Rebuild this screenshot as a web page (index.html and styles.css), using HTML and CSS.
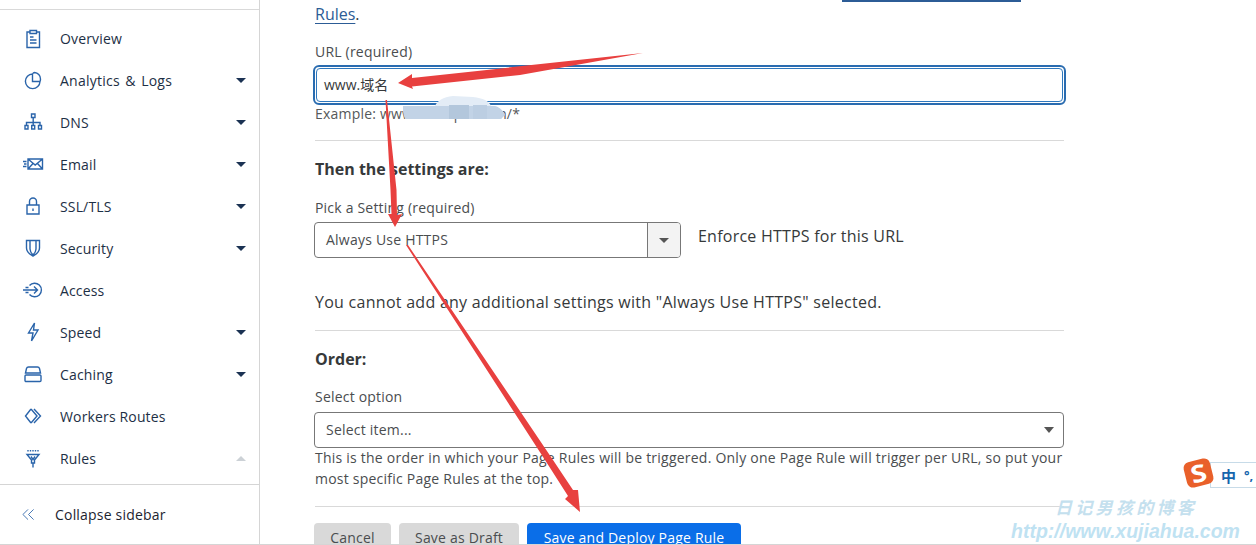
FILE: index.html
```html
<!DOCTYPE html>
<html lang="en">
<head>
<meta charset="utf-8">
<title>Page Rules</title>
<link rel="stylesheet" href="styles.css">
</head>
<body>
<div class="app">
  <aside class="sidebar">
    <div class="sidebar-top"></div>
    <nav class="nav">
      <a class="nav-item"><span class="nav-icon"><svg viewBox="0 0 20 20"><path d="M6.500 4H4v15.500h12.500V4H14M7 2.500h6.500v3H7zM7 9h3.500M7 12h6.500M7 15h6.500"/></svg></span><span class="nav-label">Overview</span><span class="caret"></span></a>
      <a class="nav-item"><span class="nav-icon"><svg viewBox="0 0 20 20"><path d="M9.500 4a7.300 7.300 0 1 0 7.500 7.500H9.500zM9.500 4c.6-1 1.300-1.500 2-1.500a6.500 6.500 0 0 1 6 6.500c0 1-.2 1.800-.5 2.500"/></svg></span><span class="nav-label nav-label-wide">Analytics &amp; Logs</span><span class="caret"></span></a>
      <a class="nav-item"><span class="nav-icon"><svg viewBox="0 0 20 20"><path d="M8.500 2h3.500v3.500H8.500zM10.200 5.500v5M3.500 13.500v-3h13.500v3M10.200 10.500v3M2 13.500h3v3.500H2zM8.700 13.500h3v3.500h-3zM15.500 13.500h3v3.500h-3z"/></svg></span><span class="nav-label">DNS</span><span class="caret"></span></a>
      <a class="nav-item"><span class="nav-icon"><svg viewBox="0 0 20 20"><path d="M5 5h14.500v10H5zM5 5l7.200 6 7.300-6M5 15l5-5.500M19.500 15 14.500 9.500M0 7.500h3.500M1 10h2.500M0 12.500h3.500"/></svg></span><span class="nav-label">Email</span><span class="caret"></span></a>
      <a class="nav-item"><span class="nav-icon"><svg viewBox="0 0 20 20"><path d="M4 9h12v9H4zM6.500 9V5.500a3.500 3.500 0 0 1 7 0V9M10 12.500v2.500"/></svg></span><span class="nav-label">SSL/TLS</span><span class="caret"></span></a>
      <a class="nav-item"><span class="nav-icon"><svg viewBox="0 0 20 20"><path d="M3.500 2.500h13v7.500c0 3.500-3.500 6.500-6.500 8-3-1.500-6.500-4.500-6.500-8zM7 3v8c0 2 1.500 4.500 3 6 1.500-1.500 3-4 3-6V3"/></svg></span><span class="nav-label">Security</span><span class="caret"></span></a>
      <a class="nav-item"><span class="nav-icon"><svg viewBox="0 0 20 20"><path d="M6.500 5.500a6.800 6.800 0 1 1 0 9M0 10h14.500M11 6.500 14.500 10 11 13.500M2.500 7.500h3M2.500 12.500h3"/></svg></span><span class="nav-label">Access</span><span class="caret"></span></a>
      <a class="nav-item"><span class="nav-icon"><svg viewBox="0 0 20 20"><path d="M11.500 1 5.500 11h4.500L8.500 19l6.500-11h-4.500z"/></svg></span><span class="nav-label">Speed</span><span class="caret"></span></a>
      <a class="nav-item"><span class="nav-icon"><svg viewBox="0 0 20 20"><path d="M2.500 9 3.500 4.500C3.800 3.500 4.500 3 5.500 3h9c1 0 1.700.5 2 1.500l1 4.500zM3 11h14c.5 0 1 .5 1 1v4.500c0 .5-.5 1-1 1H3c-.5 0-1-.5-1-1V12c0-.5.5-1 1-1z"/></svg></span><span class="nav-label">Caching</span><span class="caret"></span></a>
      <a class="nav-item"><span class="nav-icon"><svg viewBox="0 0 20 20"><path d="M8 3 2.500 10 8 17M11 3l6.500 7-6.500 7M8 3l6 7-6 7"/></svg></span><span class="nav-label">Workers Routes</span><span class="caret"></span></a>
      <a class="nav-item"><span class="nav-icon"><svg viewBox="0 0 20 20"><path d="M4 6.500h12l-4.500 5.500v3h-3v-3zM10 15v4.500M5 2v1.500M7.500 2v1.500M10 2v1.500M12.500 2v1.500M15 2v1.500M8 8.500l2 3 2-3"/></svg></span><span class="nav-label">Rules</span><span class="caret caret-up"></span></a>
    </nav>
    <div class="collapse">
      <svg class="collapse-icon" viewBox="0 0 14 14"><path d="M6.500 1.500 1 7l5.500 5.500M12.500 1.500 7 7l5.500 5.500"/></svg>
      <span>Collapse sidebar</span>
    </div>
  </aside>
  <main class="main">
    <div class="prev-link"></div>
    <p class="intro"><a class="link">Rules</a>.</p>
    <label class="label label-url">URL (required)</label>
    <div class="input-ring"><div class="input">www.域名</div></div>
    <p class="hint">Example: www.example.com/*</p>
    <hr class="rule rule-a">
    <h3 class="heading">Then the settings are:</h3>
    <label class="label label-setting">Pick a Setting (required)</label>
    <div class="setting-row">
      <div class="select select-addon"><span class="select-text">Always Use HTTPS</span><span class="addon"><span class="tri tri-small"></span></span></div>
      <span class="setting-desc">Enforce HTTPS for this URL</span>
    </div>
    <p class="notice">You cannot add any additional settings with "Always Use HTTPS" selected.</p>
    <hr class="rule rule-b">
    <h3 class="heading">Order:</h3>
    <label class="label label-order">Select option</label>
    <div class="select select-full"><span class="select-text">Select item...</span><span class="tri tri-full"></span></div>
    <p class="help">This is the order in which your Page Rules will be triggered. Only one Page Rule will trigger per URL, so put your most specific Page Rules at the top.</p>
    <hr class="rule rule-c">
    <div class="actions">
      <button class="btn btn-grey btn-cancel">Cancel</button>
      <button class="btn btn-grey btn-draft">Save as Draft</button>
      <button class="btn btn-blue">Save and Deploy Page Rule</button>
    </div>
  </main>
</div>

<svg class="blur-patch" viewBox="0 0 104 24">
  <path class="blur-light" d="M32 10C34 5 40 1 50 0L70 1C80 2 86 5 88 10z"/>
  <path d="M0 10H92C97 11 101 16 102 19L98 23H2C0 19 0 14 0 10z"/>
  <rect class="blur-dark" x="46" y="9" width="20" height="14"/>
  <rect class="blur-mid" x="70" y="9" width="14" height="14"/>
</svg>

<svg class="arrows" viewBox="0 0 1256 545">
  <polygon points="643,53 412,78 412,74 398,83 413,89 412,86.500 520,75"/>
  <polygon points="385.500,100 387,100 396.500,190 397,215 402,214 395,227 388,214 391.500,214 390.500,190"/>
  <polygon points="406,245 408,245 553,460 573,490 578,490 580,512 565,499 568,496 545,460"/>
</svg>

<div class="ime">
  <span class="ime-logo"><span class="ime-s">S</span></span>
  <span class="ime-bar"><span class="ime-zh">中</span><span class="ime-dot">°,</span></span>
</div>

<div class="watermark">
  <div class="wm-cn">日记男孩的博客</div>
  <div class="wm-url">http://www.xujiahua.com</div>
</div>
</body>
</html>
```
FILE: styles.css
```css
* { box-sizing: border-box; }
html, body { margin: 0; padding: 0; background: #fff; }
body { width: 1256px; height: 545px; overflow: hidden; position: relative; font-family: "Open Sans", "Noto Sans CJK SC", sans-serif; color: #36393a; }

.app { display: flex; height: 545px; overflow: hidden; border-bottom: 1px solid #d5d5d5; }

.sidebar { width: 260px; flex: none; border-right: 1px solid #d5d5d5; display: flex; flex-direction: column; }
.sidebar-top { height: 10px; border-bottom: 1px solid #d9d9d9; flex: none; }
.nav { padding-top: 7px; display: flex; flex-direction: column; }
.nav-item { height: 42px; display: flex; align-items: center; padding-left: 23px; color: #1d2f45; font-size: 14px; letter-spacing: .15px; }
.nav-icon { width: 20px; height: 20px; margin-right: 17px; flex: none; display: block; }
.nav-icon svg { width: 20px; height: 20px; display: block; overflow: visible; fill: none; stroke: #2a64aa; stroke-width: 1.400; }
.nav-label { flex: 1; }
.nav-label-wide { word-spacing: 1.500px; letter-spacing: .25px; }
.caret { width: 0; height: 0; margin-right: 13px; border-left: 5px solid transparent; border-right: 5px solid transparent; }
.nav-item:nth-child(n+2) .caret { border-top: 5px solid #1b3253; }
.nav-item:nth-child(1) .caret, .nav-item:nth-child(7) .caret, .nav-item:nth-child(10) .caret { border-top: 0; }
.nav-item:nth-child(n+2) .caret-up { border-top: 0; border-bottom: 5px solid #ccd1d6; }

.collapse { margin-top: 5px; border-top: 1px solid #d5d5d5; height: 60px; display: flex; align-items: center; padding-left: 22px; font-size: 14px; letter-spacing: .2px; color: #1c2430; }
.collapse-icon { width: 13px; height: 13px; margin-right: 20px; fill: none; stroke: #3b6fb0; stroke-width: 1; }

.main { flex: 1; padding-left: 55px; width: 996px; }
.main > * { width: 749px; }
.prev-link { width: 179px; margin-left: 527px; height: 2px; border-top: 2px solid #2c5c96; }
.intro { margin: 0; font-size: 16px; line-height: 24px; }
.link { color: #2c5c96; text-decoration: underline; text-underline-offset: 3px; text-decoration-thickness: 1px; }
.label { display: block; font-size: 14px; line-height: 20px; color: #4a4d4f; letter-spacing: .2px; }
.label-url { margin-top: 16px; }
.label-setting { margin-top: 17px; }
.label-order { margin-top: 16px; }

.input-ring { margin: 3px 0 0 -2px; width: 753px; height: 40px; border: 2px solid #2a6cb0; border-radius: 6px; padding: 1px; }
.input { height: 34px; border: 1px solid #2f78bd; border-radius: 4px; padding-left: 7px; font-size: 14px; line-height: 32px; color: #36393a; }
.hint { margin: 0; font-size: 14px; line-height: 18px; color: #55585a; letter-spacing: .2px; }

.rule { border: 0; border-top: 1px solid #d9d9d9; margin: 0; height: 1px; }
.rule-a { margin-top: 17px; }
.rule-b { margin-top: 16px; }
.rule-c { margin-top: 17px; }
.heading { margin: 16px 0 0; font-size: 16px; line-height: 24px; font-weight: 700; color: #36393a; }

.setting-row { display: flex; align-items: center; margin-top: 4px; }
.select { height: 36px; border: 1px solid #777; border-radius: 4px; display: flex; align-items: center; font-size: 14px; color: #4a4d4f; letter-spacing: .22px; position: relative; }
.select-addon { width: 367px; margin-left: -1px; flex: none; }
.select-full { width: 750px; margin-left: -1px; margin-top: 5px; }
.select-text { flex: 1; padding: 0 0 2px 11px; }
.addon { width: 33px; height: 34px; border-left: 1px solid #777; background: #f3f3f3; border-radius: 0 3px 3px 0; display: flex; align-items: center; justify-content: center; }
.tri { display: block; width: 0; height: 0; border-left: 6px solid transparent; border-right: 6px solid transparent; border-top: 6px solid #555; }
.tri-small { border-left-width: 5px; border-right-width: 5px; border-top-width: 5px; }
.tri-full { margin-right: 9px; border-left-width: 5px; border-right-width: 5px; }
.setting-desc { margin-left: 17px; font-size: 16px; line-height: 24px; letter-spacing: .23px; position: relative; top: -4px; }
.notice { margin: 32px 0 0; font-size: 16px; line-height: 24px; letter-spacing: .27px; }
.help { margin: -1px 0 0; font-size: 14px; line-height: 21px; color: #4a4d4f; letter-spacing: .23px; }

.actions { display: flex; gap: 8px; margin-top: 16px; margin-left: -1px; }
.btn { border: 0; height: 30px; flex: none; border-radius: 4px; font: 14px/30px "Open Sans", sans-serif; letter-spacing: .2px; padding: 0; }
.btn-grey { background: #d9d9d9; color: #4a4d4f; }
.btn-cancel { width: 77px; }
.btn-draft { width: 120px; }
.btn-blue { width: 214px; background: #0a6ee8; color: #fff; }

.blur-patch { position: absolute; left: 403px; top: 96px; width: 104px; height: 24px; fill: #c2d3e6; }
.blur-light { fill: #e3ecf6; }
.blur-dark { fill: #b3c7dc; }
.blur-mid { fill: #bccee2; }

.arrows { position: absolute; left: 0; top: 0; width: 1256px; height: 545px; fill: #e8403f; pointer-events: none; }

.ime { position: absolute; left: 1183px; top: 458px; width: 73px; height: 30px; }
.ime-logo { position: absolute; left: 2px; top: 2px; width: 27px; height: 26px; background: #e9602a; border-radius: 6px; transform: rotate(-14deg); color: #fff; font: 700 24px/26px "Open Sans", sans-serif; text-align: center; z-index: 1; }
.ime-s { display: block; transform: scaleX(1.2); }
.ime-bar { position: absolute; left: 27px; top: 4px; width: 46px; height: 26px; background: #fff; border: 1px solid #c7dbe8; border-right: 0; display: flex; align-items: center; color: #1665ad; }
.ime-zh { margin-left: 10px; font: 700 15px "Noto Sans CJK SC", sans-serif; }
.ime-dot { margin-left: 8px; font: 700 13px "Open Sans", sans-serif; }

.watermark { position: absolute; left: 1011px; top: 496px; width: 240px; color: #bfe2f2; }
.wm-cn { margin-left: 44px; font: italic 700 17px/22px "Noto Sans CJK SC", sans-serif; letter-spacing: 3.300px; color: #c4e0ee; }
.wm-url { font: italic 700 19.500px/26px "Liberation Sans", sans-serif; white-space: nowrap; }
```
